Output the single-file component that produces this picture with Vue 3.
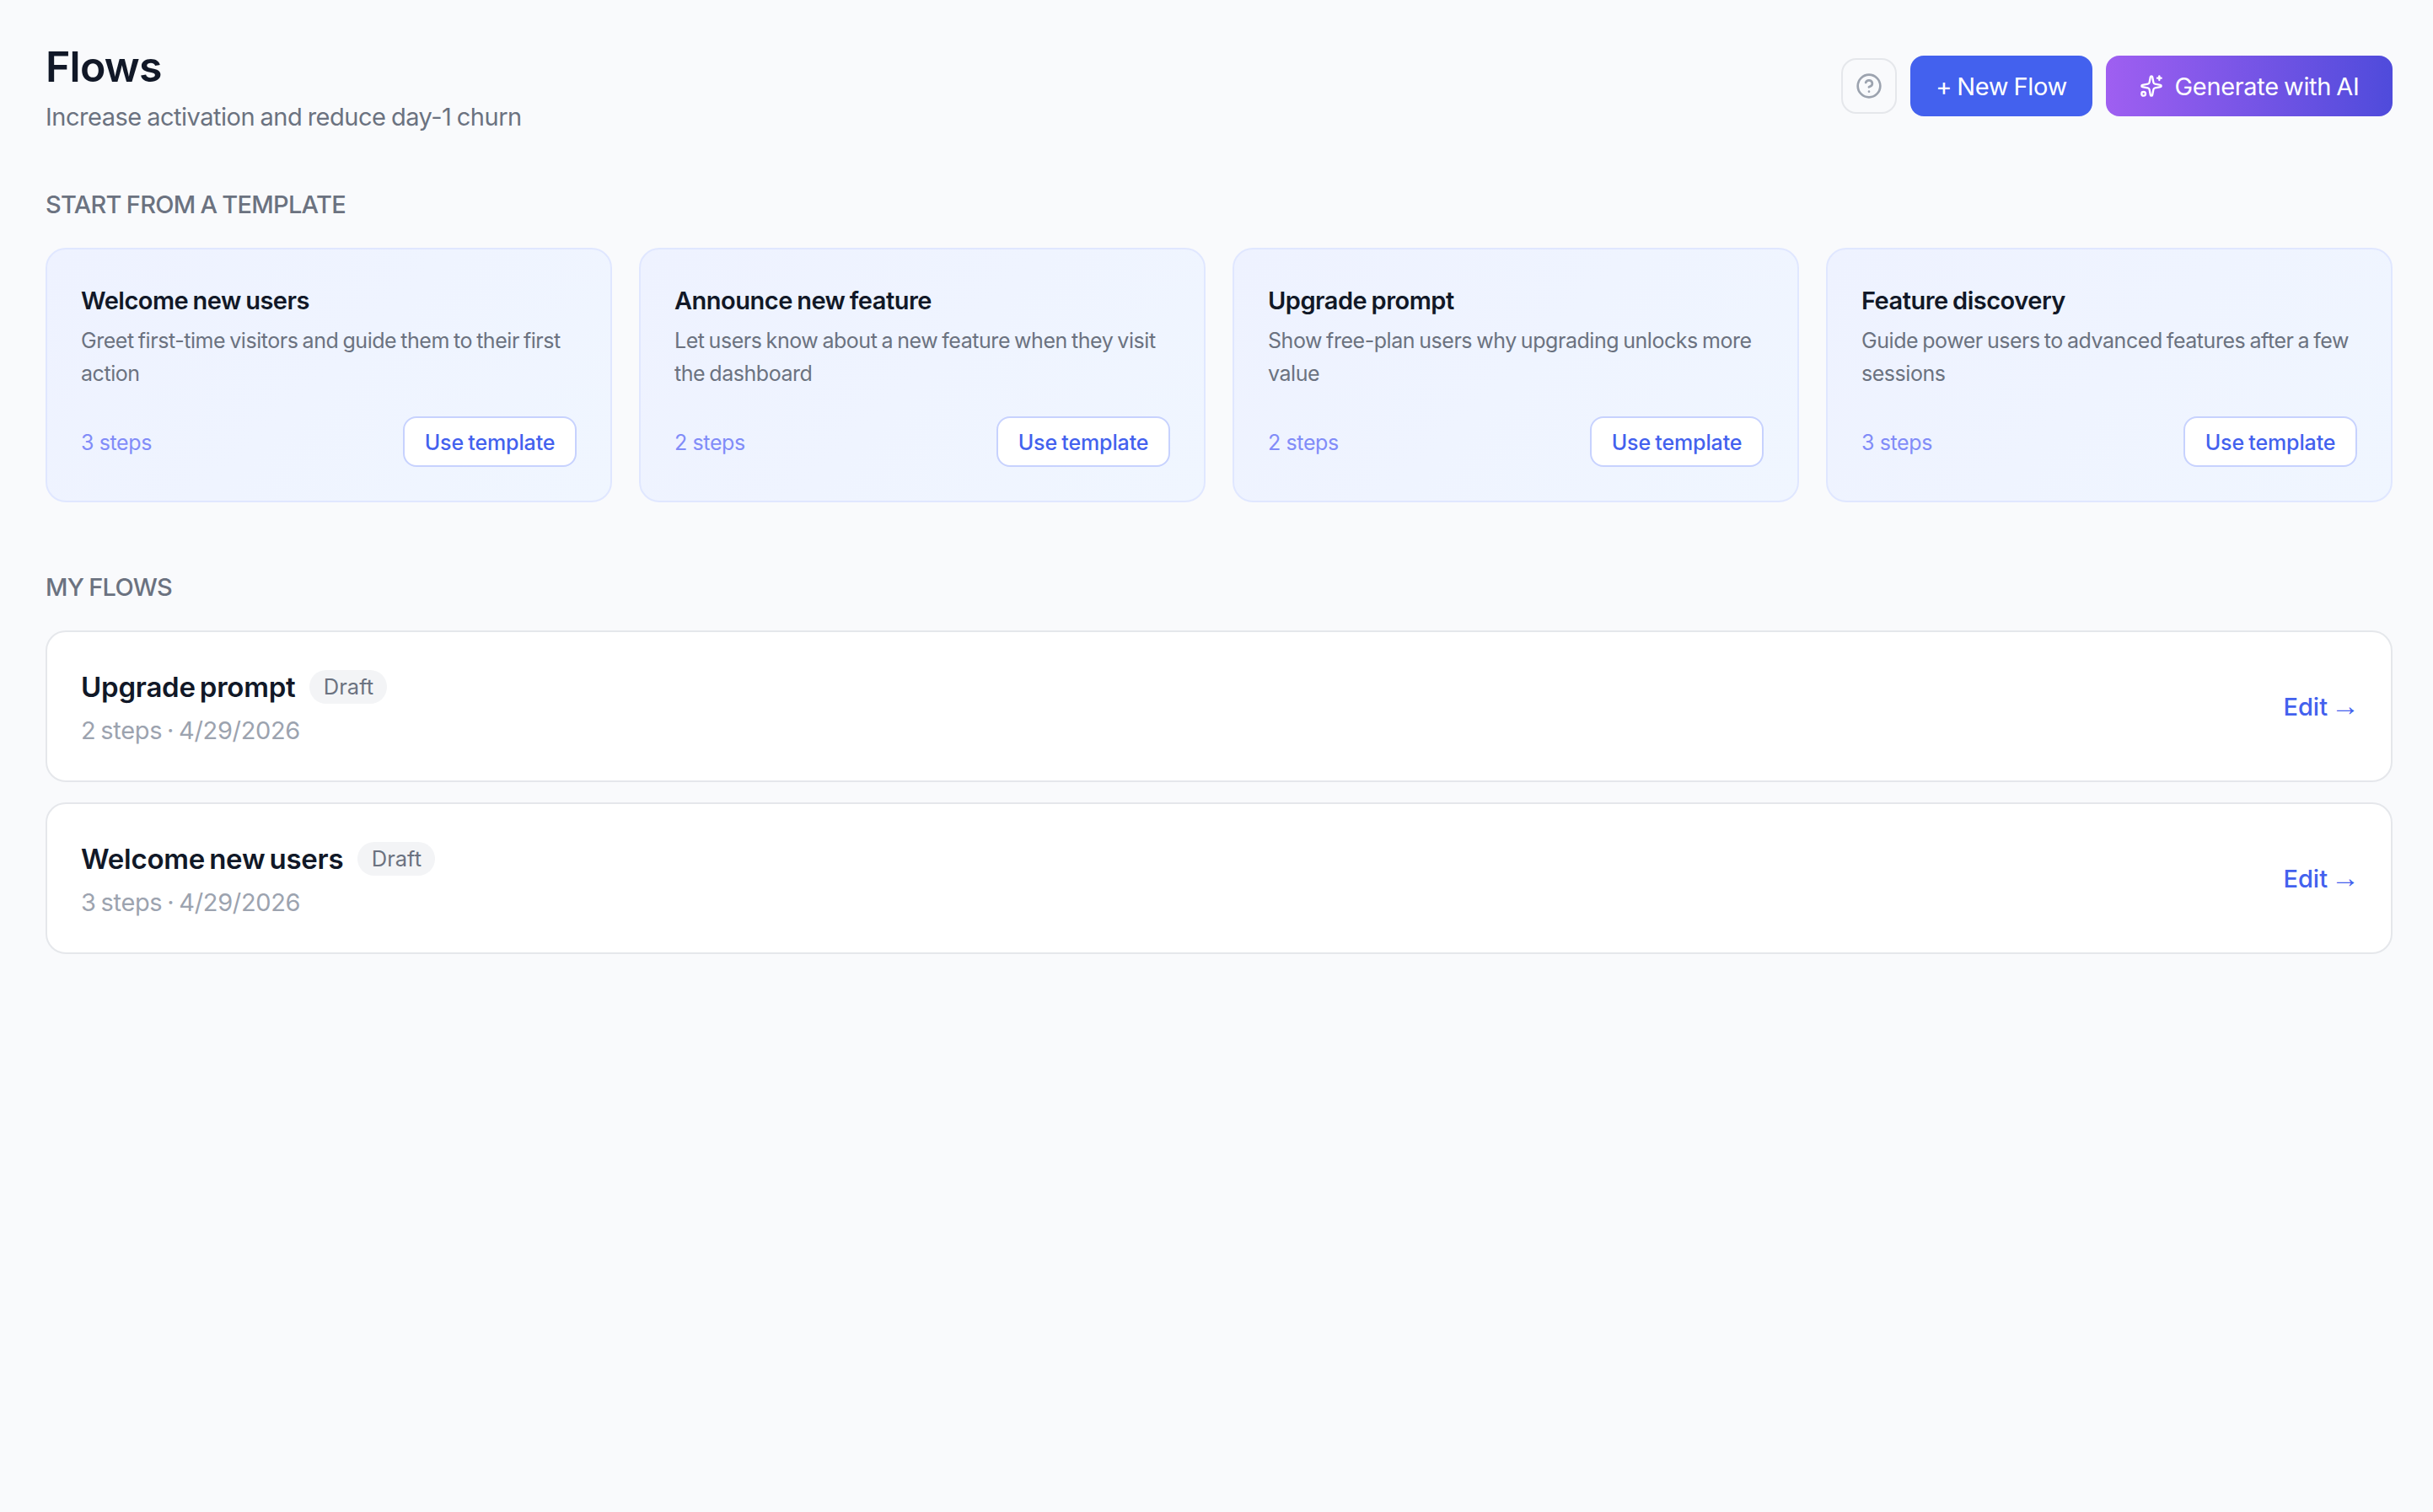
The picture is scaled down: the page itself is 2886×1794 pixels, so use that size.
<template>
  <div class="page">
    <header class="page-header">
      <div class="heading">
        <h1 class="title">Flows</h1>
        <p class="subtitle">Increase activation and reduce day-1 churn</p>
      </div>
      <div class="actions">
        <button class="btn-help" aria-label="Help">
          <svg class="help-icon" viewBox="0 0 24 24" fill="none" stroke="currentColor" stroke-width="2" stroke-linecap="round" stroke-linejoin="round">
            <circle cx="12" cy="12" r="10" />
            <path d="M9.09 9a3 3 0 0 1 5.83 1c0 2-3 3-3 3" />
            <path d="M12 17h.01" />
          </svg>
        </button>
        <button class="btn btn-primary">+ New Flow</button>
        <button class="btn btn-ai">
          <svg class="ai-icon" viewBox="0 0 24 24" fill="none" stroke="currentColor" stroke-width="2" stroke-linecap="round" stroke-linejoin="round">
            <path d="M11.017 2.814a1 1 0 0 1 1.966 0l1.051 5.558a2 2 0 0 0 1.594 1.594l5.558 1.051a1 1 0 0 1 0 1.966l-5.558 1.051a2 2 0 0 0-1.594 1.594l-1.051 5.558a1 1 0 0 1-1.966 0l-1.051-5.558a2 2 0 0 0-1.594-1.594l-5.558-1.051a1 1 0 0 1 0-1.966l5.558-1.051a2 2 0 0 0 1.594-1.594z" />
            <path d="M20 2v4" />
            <path d="M22 4h-4" />
            <circle cx="4" cy="20" r="2" />
          </svg>
          <span>Generate with AI</span>
        </button>
      </div>
    </header>

    <section class="templates">
      <h2 class="section-label">START FROM A TEMPLATE</h2>
      <div class="template-grid">
        <article v-for="t in templates" :key="t.name" class="template-card">
          <h3 class="template-name">{{ t.name }}</h3>
          <p class="template-desc">{{ t.description }}</p>
          <div class="template-footer">
            <span class="template-steps">{{ t.steps }} steps</span>
            <button class="btn-template">Use template</button>
          </div>
        </article>
      </div>
    </section>

    <section class="flows">
      <h2 class="section-label">MY FLOWS</h2>
      <div class="flow-list">
        <article v-for="f in flows" :key="f.name" class="flow-row">
          <div class="flow-info">
            <div class="flow-head">
              <span class="flow-name">{{ f.name }}</span>
              <span class="badge">{{ f.status }}</span>
            </div>
            <p class="flow-meta">{{ f.steps }} steps · {{ f.date }}</p>
          </div>
          <a class="flow-edit">Edit <span class="arrow">→</span></a>
        </article>
      </div>
    </section>
  </div>
</template>

<script setup>
const templates = [
  { name: 'Welcome new users', description: 'Greet first-time visitors and guide them to their first action', steps: 3 },
  { name: 'Announce new feature', description: 'Let users know about a new feature when they visit the dashboard', steps: 2 },
  { name: 'Upgrade prompt', description: 'Show free-plan users why upgrading unlocks more value', steps: 2 },
  { name: 'Feature discovery', description: 'Guide power users to advanced features after a few sessions', steps: 3 },
]

const flows = [
  { name: 'Upgrade prompt', status: 'Draft', steps: 2, date: '4/29/2026' },
  { name: 'Welcome new users', status: 'Draft', steps: 3, date: '4/29/2026' },
]
</script>

<style>
body {
  background: #f9fafc;
}
</style>

<style scoped>
.page {
  box-sizing: border-box;
  min-height: 1794px;
  padding: 48px 48px 48px 54px;
  background: #f9fafc;
  color: #111827;
  font-family: Inter, 'Noto Sans', sans-serif;
  font-size: 29px;
}

h1, h2, h3, p { margin: 0; }

button {
  box-sizing: border-box;
  font-family: inherit;
  white-space: nowrap;
}

.page-header {
  display: flex;
  justify-content: space-between;
  height: 108px;
}

.title {
  font-size: 50px;
  font-weight: 600;
  line-height: 62px;
  letter-spacing: -0.016em;
}

.subtitle {
  margin-top: 8px;
  font-size: 29px;
  line-height: 42px;
  letter-spacing: -0.017em;
  word-spacing: -1.2px;
  color: #6b7280;
}

.actions {
  display: flex;
  align-items: center;
  gap: 16px;
}

.btn-help {
  display: flex;
  align-items: center;
  justify-content: center;
  width: 66px;
  height: 66px;
  padding: 0;
  border: 2px solid #e5e7eb;
  border-radius: 18px;
  background: transparent;
  color: #9ca3af;
}

.help-icon { width: 32px; height: 32px; }

.btn {
  display: flex;
  align-items: center;
  justify-content: center;
  height: 72px;
  padding: 0;
  border: 0;
  border-radius: 16px;
  color: #fff;
  font-size: 29px;
  font-weight: 430;
  letter-spacing: -0.012em;
  word-spacing: -1.5px;
}

.btn-primary { width: 216px; background: #4361ee; }

.btn-ai {
  width: 340px;
  gap: 14px;
  background: linear-gradient(90deg, #9f5ff1, #4f4bdb);
}

.ai-icon { width: 28px; height: 28px; }

.section-label {
  font-size: 29px;
  font-weight: 500;
  line-height: 42px;
  letter-spacing: -0.025em;
  word-spacing: -1px;
  color: #6b7280;
}

.templates { margin-top: 66px; }

.template-grid {
  display: grid;
  grid-template-columns: repeat(4, 1fr);
  gap: 32px;
  margin-top: 30px;
}

.template-card {
  box-sizing: border-box;
  height: 302px;
  padding: 40px;
  border: 2px solid #e0e7ff;
  border-radius: 24px;
  background: linear-gradient(135deg, #eef2ff, #f0f6ff);
}

.template-name {
  font-size: 29px;
  font-weight: 570;
  line-height: 42px;
  letter-spacing: -0.017em;
  word-spacing: -1.5px;
}

.template-desc {
  margin-top: 7px;
  font-size: 25px;
  line-height: 39px;
  letter-spacing: -0.018em;
  word-spacing: -1.5px;
  color: #6b7280;
}

.template-footer {
  display: flex;
  align-items: center;
  justify-content: space-between;
  margin-top: 31px;
}

.template-steps {
  padding-top: 2px;
  font-size: 25px;
  letter-spacing: -0.015em;
  color: #818cf8;
}

.btn-template {
  width: 206px;
  height: 60px;
  padding: 2px 0 0;
  border: 2px solid #c7d2fe;
  border-radius: 16px;
  background: #fff;
  color: #4361ee;
  font-size: 25px;
  font-weight: 500;
  letter-spacing: -0.005em;
  word-spacing: -1.2px;
}

.flows { margin-top: 80px; }

.flow-list {
  display: flex;
  flex-direction: column;
  gap: 24px;
  margin-top: 30px;
}

.flow-row {
  display: flex;
  align-items: center;
  justify-content: space-between;
  box-sizing: border-box;
  height: 180px;
  padding: 0 40px;
  border: 2px solid #e5e7eb;
  border-radius: 24px;
  background: #fff;
}

.flow-info { padding-top: 2px; }

.flow-head {
  display: flex;
  align-items: center;
  gap: 17px;
}

.flow-name {
  font-size: 33px;
  font-weight: 570;
  line-height: 48px;
  letter-spacing: -0.007em;
  word-spacing: -3px;
}

.badge {
  width: 92px;
  border-radius: 20px;
  background: #f3f4f6;
  color: #6b7280;
  font-size: 25.5px;
  line-height: 40px;
  text-align: center;
}

.flow-meta {
  margin-top: 7px;
  font-size: 29px;
  line-height: 42px;
  letter-spacing: -0.012em;
  word-spacing: -1.8px;
  color: #9ca3af;
}

.flow-edit {
  display: flex;
  align-items: center;
  gap: 4px;
  color: #4361ee;
  font-weight: 450;
}

.arrow {
  margin-right: -3px;
  font-family: 'Liberation Serif', serif;
  font-size: 34px;
  font-weight: 400;
  line-height: 34px;
}
</style>
